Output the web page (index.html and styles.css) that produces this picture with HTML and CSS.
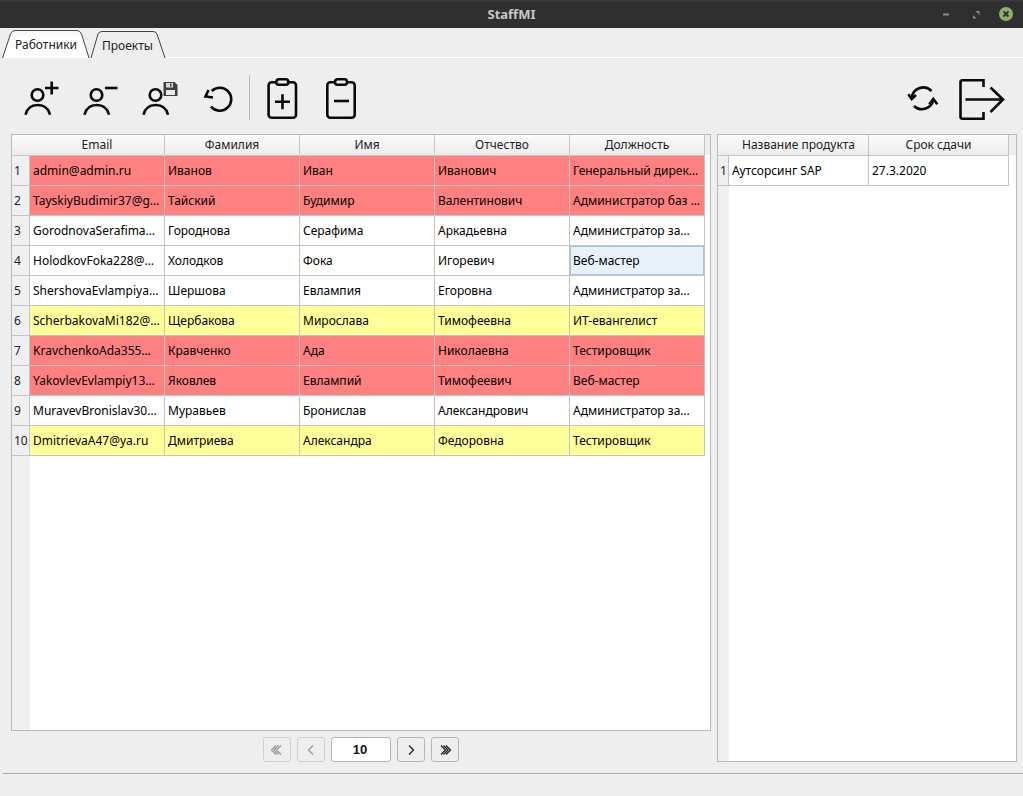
FILE: index.html
```html
<!DOCTYPE html>
<html lang="ru">
<head>
    <meta charset="UTF-8">
    <title>StaffMI</title>
    <link rel="stylesheet" href="styles.css">
</head>
<body>
    <header class="titlebar">
        <span class="title">StaffMI</span>
        <div class="winbtns">
            <svg class="winbtn" width="14" height="14" viewBox="0 0 14 14"><rect x="5" y="6.500" width="6" height="2" fill="#8e8e8e"/></svg>
            <svg class="winbtn" width="14" height="14" viewBox="0 0 14 14"><path d="M7.500 4h4v4zM5 8l3.500 3.500H5z" fill="#8e8e8e"/></svg>
            <svg class="winbtn" width="16" height="16" viewBox="0 0 16 16"><circle cx="8" cy="8" r="7" fill="#8fae6b"/><path d="M5.500 5.500l5 5M10.500 5.500l-5 5" stroke="#2f2f2f" stroke-width="1.800"/></svg>
        </div>
    </header>

    <nav class="tabs">
        <div class="tab tab-active">
            <svg class="tab-shape" width="88" height="30" viewBox="0 0 88 30"><path d="M0.500 30L8.500 6Q10 2.500 13 2.500H75Q78 2.500 79.500 6L87 30" fill="url(#tabfill)" stroke="#444"/><defs><linearGradient id="tabfill" x1="0" y1="0" x2="0" y2="1"><stop offset="0" stop-color="#f4f4f4"/><stop offset="0.3" stop-color="#ffffff"/></linearGradient></defs></svg>
            <span class="tab-label">Работники</span>
        </div>
        <div class="tab tab-second">
            <svg class="tab-shape" width="76" height="30" viewBox="0 0 76 30"><path d="M1 30L8 6Q9 3.500 12 3.500H63Q66 3.500 67 6L75 30" fill="#eeeeee" stroke="#444"/></svg>
            <span class="tab-label">Проекты</span>
        </div>
    </nav>

    <section class="toolbar">
        <svg class="icon" width="40" height="44" viewBox="0 0 40 44"><g fill="none" stroke="#0a0a0a" stroke-width="2.600"><circle cx="16.500" cy="18" r="5.800"/><path d="M4.500 37.800C6 31 11 28 16.700 28S27.500 31 29 37.800"/><path d="M24 11H37.500M30.700 4.500V17.500"/></g></svg>
        <svg class="icon" width="40" height="44" viewBox="0 0 40 44"><g fill="none" stroke="#0a0a0a" stroke-width="2.600"><circle cx="16.500" cy="18" r="5.800"/><path d="M4.500 37.800C6 31 11 28 16.700 28S27.500 31 29 37.800"/><path d="M25 11H37.500"/></g></svg>
        <svg class="icon" width="40" height="44" viewBox="0 0 40 44"><g fill="none" stroke="#0a0a0a" stroke-width="2.600"><circle cx="16.500" cy="18" r="5.800"/><path d="M4.500 37.800C6 31 11 28 16.700 28S27.500 31 29 37.800"/></g><path d="M24.500 5H35.500L38.500 8V19H24.500Z" fill="#3f3f3f"/><rect x="27" y="6" width="7" height="4.500" fill="#d8d8d8"/><rect x="31" y="6.500" width="1.500" height="3" fill="#3f3f3f"/><rect x="27" y="13" width="9" height="5" fill="#e8e8e8"/></svg>
        <svg class="icon icon-undo" width="40" height="44" viewBox="0 0 40 44"><g fill="none" stroke="#0a0a0a" stroke-width="2.600"><path d="M13.700 14A11.500 11.500 0 1 1 13 29.700"/><path d="M10.500 13L7.500 19.500L15 20.500"/></g></svg>
        <div class="sep"></div>
        <svg class="icon icon-clip" width="40" height="44" viewBox="0 0 40 44"><g fill="none" stroke="#0a0a0a" stroke-width="2.600"><rect x="6.600" y="5.300" width="27.400" height="35.400" rx="3"/><rect x="14.300" y="2.300" width="12" height="5.500" rx="2.500" fill="#eeeeee"/><path d="M13 24.700H28M20.500 17.200V32.200"/></g></svg>
        <svg class="icon icon-clip2" width="40" height="44" viewBox="0 0 40 44"><g fill="none" stroke="#0a0a0a" stroke-width="2.600"><rect x="6.300" y="5.300" width="27.400" height="35.400" rx="3"/><rect x="14" y="2.300" width="12" height="5.500" rx="2.500" fill="#eeeeee"/><path d="M13 24H28"/></g></svg>
        <div class="spacer"></div>
        <svg class="icon" width="40" height="44" viewBox="0 0 40 44"><g fill="none" stroke="#0a0a0a" stroke-width="2.600"><path d="M8.700 21.500A11.500 11.500 0 0 1 28.500 14"/><path d="M30.300 22.500A11.500 11.500 0 0 1 11 29"/><path d="M5.300 17.300L8.700 22L13 18"/><path d="M26.300 27.300L30.300 22L34.300 27.300"/></g></svg>
        <svg class="icon icon-exit" width="46" height="44" viewBox="0 0 46 44"><g fill="none" stroke="#0a0a0a" stroke-width="2.600"><path d="M24.500 10V3.300H3.500Q1.500 3.300 1.500 5.300V39.700Q1.500 41.700 3.500 41.700H24.500V35"/><path d="M6.500 22.500H43M31.500 10.500L44 22.500L31.500 35"/></g></svg>
    </section>

    <main class="content">
        <div class="left">
            <div class="panel panel-main">
                <table class="grid grid-staff">
                    <colgroup><col class="col-num"><col class="col-wide"><col class="col-wide"><col class="col-wide"><col class="col-wide"><col class="col-wide"></colgroup>
                    <tr><th class="corner"></th><th>Email</th><th>Фамилия</th><th>Имя</th><th>Отчество</th><th>Должность</th></tr>
                    <tr class="row-red"><td class="num">1</td><td>admin@admin.ru</td><td>Иванов</td><td>Иван</td><td>Иванович</td><td>Генеральный дирек…</td></tr>
                    <tr class="row-red"><td class="num">2</td><td>TayskiyBudimir37@g…</td><td>Тайский</td><td>Будимир</td><td>Валентинович</td><td>Администратор баз …</td></tr>
                    <tr><td class="num">3</td><td>GorodnovaSerafima…</td><td>Городнова</td><td>Серафима</td><td>Аркадьевна</td><td>Администратор за…</td></tr>
                    <tr><td class="num">4</td><td>HolodkovFoka228@…</td><td>Холодков</td><td>Фока</td><td>Игоревич</td><td class="current">Веб-мастер</td></tr>
                    <tr><td class="num">5</td><td>ShershovaEvlampiya…</td><td>Шершова</td><td>Евлампия</td><td>Егоровна</td><td>Администратор за…</td></tr>
                    <tr class="row-yellow"><td class="num">6</td><td>ScherbakovaMi182@…</td><td>Щербакова</td><td>Мирослава</td><td>Тимофеевна</td><td>ИТ-евангелист</td></tr>
                    <tr class="row-red"><td class="num">7</td><td>KravchenkoAda355…</td><td>Кравченко</td><td>Ада</td><td>Николаевна</td><td>Тестировщик</td></tr>
                    <tr class="row-red"><td class="num">8</td><td>YakovlevEvlampiy13…</td><td>Яковлев</td><td>Евлампий</td><td>Тимофеевич</td><td>Веб-мастер</td></tr>
                    <tr><td class="num">9</td><td>MuravevBronislav30…</td><td>Муравьев</td><td>Бронислав</td><td>Александрович</td><td>Администратор за…</td></tr>
                    <tr class="row-yellow"><td class="num">10</td><td>DmitrievaA47@ya.ru</td><td>Дмитриева</td><td>Александра</td><td>Федоровна</td><td>Тестировщик</td></tr>
                </table>
            </div>
            <div class="pager">
                <button class="pg pg-off"><svg width="14" height="12" viewBox="0 0 14 12"><path d="M6 1.500L1.500 6L6 10.500M8.500 1.500L4 6L8.500 10.500M11 1.500L6.500 6L11 10.500" fill="none" stroke="#9a9a9a" stroke-width="1.300"/></svg></button>
                <button class="pg pg-off"><svg width="10" height="12" viewBox="0 0 10 12"><path d="M7 1.500L2.500 6L7 10.500" fill="none" stroke="#9a9a9a" stroke-width="1.300"/></svg></button>
                <div class="pg-input">10</div>
                <button class="pg"><svg width="10" height="12" viewBox="0 0 10 12"><path d="M3 1.500L7.500 6L3 10.500" fill="none" stroke="#222" stroke-width="1.300"/></svg></button>
                <button class="pg"><svg width="14" height="12" viewBox="0 0 14 12"><path d="M3 1.500L7.500 6L3 10.500M5.500 1.500L10 6L5.500 10.500M8 1.500L12.500 6L8 10.500" fill="none" stroke="#222" stroke-width="1.300"/></svg></button>
            </div>
        </div>
        <div class="panel panel-side">
            <table class="grid grid-projects">
                <colgroup><col class="col-num2"><col class="col-side"><col class="col-side"></colgroup>
                <tr><th class="corner"></th><th>Название продукта</th><th>Срок сдачи</th></tr>
                <tr><td class="num">1</td><td>Аутсорсинг SAP</td><td>27.3.2020</td></tr>
            </table>
        </div>
    </main>

    <div class="statusline"></div>
</body>
</html>
```

FILE: styles.css
```css
html, body {
    margin: 0;
    height: 796px;
    overflow: hidden;
}
body {
    display: flex;
    flex-direction: column;
    background-color: #eeeeee;
    font-family: "Noto Sans", sans-serif;
    font-size: 12px;
    color: #000;
}

/* title bar */
.titlebar {
    height: 28px;
    flex: none;
    background: linear-gradient(#3a3a3a, #2f2f2f 3px);
    display: flex;
    align-items: center;
    justify-content: center;
    position: relative;
}
.title {
    color: #c8c8c8;
    font-weight: bold;
    font-size: 13px;
}
.winbtns {
    position: absolute;
    right: 9px;
    top: 6px;
    display: flex;
    align-items: center;
    gap: 16px;
}

/* tabs */
.tabs {
    height: 30px;
    flex: none;
    display: flex;
    padding-left: 2px;
    box-sizing: border-box;
    position: relative;
}
.tabs::after {
    content: "";
    flex: 1;
    height: 1px;
    margin-top: 29px;
    background-color: #fff;
}
.tab {
    position: relative;
    height: 30px;
}
.tab-active {
    width: 88px;
}
.tab-second {
    width: 76px;
}
.tab-shape {
    position: absolute;
    left: 0;
    top: 0;
}
.tab-label {
    position: absolute;
    top: 8px;
    left: 13px;
    font-size: 12px;
    color: #222;
}
.tab-second .tab-label {
    top: 9px;
    left: 12px;
}

/* toolbar */
.toolbar {
    height: 76px;
    flex: none;
    display: flex;
    align-items: flex-start;
    padding: 19px 18px 0 21px;
    box-sizing: border-box;
}
.icon {
    flex: none;
    margin-right: 19px;
}
.icon-undo {
    margin-right: 11px;
}
.icon-clip {
    margin-left: 12px;
}
.icon-clip2 {
    margin-right: 0;
}
.icon-exit {
    margin-right: 0;
    margin-left: -3px;
}
.sep {
    width: 1px;
    height: 45px;
    margin-top: -2px;
    background-color: #b8b8b8;
    flex: none;
}
.spacer {
    flex: 1;
}

/* main area */
.content {
    display: flex;
    gap: 6px;
    padding-left: 11px;
    flex: none;
}
.left {
    width: 700px;
}
.panel {
    border: 1px solid #b9b9b9;
    box-sizing: border-box;
    background:
        linear-gradient(#eeeeee, #eeeeee) top / 100% 20px no-repeat,
        linear-gradient(to right, #f0f0f0 18px, #fff 18px);
}
.panel-main {
    height: 597px;
}
.panel-side {
    width: 300px;
    height: 628px;
    background:
        linear-gradient(#eeeeee, #eeeeee) top / 100% 20px no-repeat,
        linear-gradient(to right, #f0f0f0 11px, #fff 11px);
}
.grid {
    border-collapse: separate;
    border-spacing: 0;
    table-layout: fixed;
    font-size: 12px;
}
.grid-staff {
    width: 693px;
}
.grid-projects {
    width: 291px;
}
.col-num {
    width: 18px;
}
.col-wide {
    width: 135px;
}
.col-num2 {
    width: 11px;
}
.col-side {
    width: 140px;
}
.grid th {
    height: 21px;
    padding: 0 0 1px;
    box-sizing: border-box;
    font-weight: normal;
    text-align: center;
    color: #222;
    background: linear-gradient(#fbfbfb, #ececec);
    border-right: 1px solid #c4c4c4;
    border-bottom: 1px solid #c4c4c4;
}
.grid th.corner {
    border-right: 0;
}
.grid td {
    height: 30px;
    padding: 0 3px;
    box-sizing: border-box;
    white-space: nowrap;
    overflow: hidden;
    background-color: #fff;
    border-right: 1px solid #c4c4c4;
    border-bottom: 1px solid #c4c4c4;
}
.grid td.num {
    padding: 0 0 0 2px;
    background-color: #f0f0f0;
    color: #222;
}
.grid tr.row-red td:not(.num) {
    background-color: #ff8080;
}
.grid tr.row-yellow td:not(.num) {
    background-color: #ffff99;
}
.grid td.current {
    background-color: #e6f1f9;
    box-shadow: inset 0 0 0 1px #a9c4d6;
}

/* pager */
.pager {
    display: flex;
    justify-content: center;
    gap: 6px;
    margin-top: 6px;
}
.pg {
    width: 28px;
    height: 25px;
    padding: 0;
    border: 1px solid #b5b5b5;
    border-radius: 3px;
    background: #eeeeee;
    display: flex;
    align-items: center;
    justify-content: center;
}
.pg-off {
    border-color: #cfcfcf;
}
.pg-input {
    width: 60px;
    height: 25px;
    box-sizing: border-box;
    padding-right: 2px;
    border: 1px solid #b5b5b5;
    border-radius: 3px;
    background-color: #fff;
    font-family: "Liberation Sans", sans-serif;
    font-weight: bold;
    font-size: 13px;
    line-height: 23px;
    text-align: center;
    color: #111;
}

.statusline {
    height: 1px;
    margin: 11px 0 0 3px;
    background-color: #a8a8a8;
    flex: none;
}
```
